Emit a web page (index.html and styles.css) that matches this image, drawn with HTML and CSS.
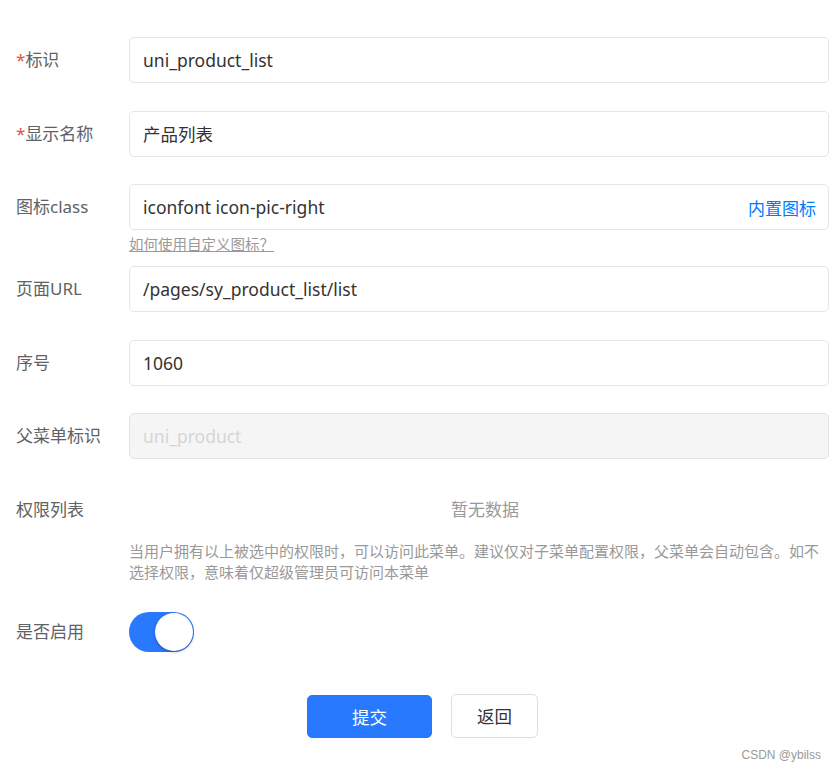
FILE: index.html
```html
<!DOCTYPE html>
<html lang="zh-CN">
<head>
  <meta charset="UTF-8" />
  <meta name="viewport" content="width=device-width, initial-scale=1.0"/>
  <title>编辑菜单</title>
  <link rel="stylesheet" href="styles.css">
</head>
<body>

  <form class="menu-form">
    <div class="form-row">
      <label class="form-label"><span class="required">*</span>标识</label>
      <div class="form-field">
        <div class="input">uni_product_list</div>
      </div>
    </div>

    <div class="form-row">
      <label class="form-label"><span class="required">*</span>显示名称</label>
      <div class="form-field">
        <div class="input">产品列表</div>
      </div>
    </div>

    <div class="form-row with-hint">
      <label class="form-label">图标class</label>
      <div class="form-field">
        <div class="input">
          <span>iconfont icon-pic-right</span>
          <a class="input-link">内置图标</a>
        </div>
        <a class="hint-link">如何使用自定义图标？</a>
      </div>
    </div>

    <div class="form-row">
      <label class="form-label">页面URL</label>
      <div class="form-field">
        <div class="input">/pages/sy_product_list/list</div>
      </div>
    </div>

    <div class="form-row">
      <label class="form-label">序号</label>
      <div class="form-field">
        <div class="input">1060</div>
      </div>
    </div>

    <div class="form-row">
      <label class="form-label">父菜单标识</label>
      <div class="form-field">
        <div class="input disabled">uni_product</div>
      </div>
    </div>

    <div class="form-row perm-row">
      <label class="form-label">权限列表</label>
      <div class="form-field">
        <div class="empty-data">暂无数据</div>
        <p class="help-text">当用户拥有以上被选中的权限时，可以访问此菜单。建议仅对子菜单配置权限，父菜单会自动包含。如不选择权限，意味着仅超级管理员可访问本菜单</p>
      </div>
    </div>

    <div class="form-row switch-row">
      <label class="form-label">是否启用</label>
      <div class="form-field">
        <span class="switch on"><span class="knob"></span></span>
      </div>
    </div>

    <div class="actions">
      <button type="button" class="btn btn-primary">提交</button>
      <button type="button" class="btn btn-plain">返回</button>
    </div>
  </form>

  <div class="watermark">CSDN @ybilss</div>

</body>
</html>
```

FILE: styles.css
```css
* {
  box-sizing: border-box;
  margin: 0;
  padding: 0;
}

body {
  font-family: "Noto Sans", "Noto Sans CJK SC", sans-serif;
  background: #ffffff;
  color: #333;
  width: 835px;
  height: 771px;
  overflow: hidden;
  position: relative;
}

.menu-form {
  padding: 37px 6px 0 16px;
}

.form-row {
  display: flex;
  align-items: flex-start;
  margin-bottom: 27.5px;
}

.form-label {
  width: 113px;
  flex-shrink: 0;
  height: 46px;
  line-height: 46px;
  font-size: 17px;
  color: #606266;
}

.required {
  color: #dd524d;
}

.form-field {
  flex: 1;
  min-width: 0;
}

.input {
  display: flex;
  align-items: center;
  justify-content: space-between;
  height: 46px;
  padding: 0 12px 0 13px;
  border: 1px solid #e5e5e5;
  border-radius: 5px;
  font-size: 17.5px;
  color: #333;
  background: #fff;
}

.input.disabled {
  background: #f5f5f5;
  color: #d5d5d5;
}

.input-link {
  color: #007aff;
  font-size: 17px;
  cursor: pointer;
}

.with-hint {
  margin-bottom: 11px;
}

.hint-link {
  display: block;
  margin-top: 3px;
  height: 22px;
  line-height: 22px;
  font-size: 14.5px;
  color: #999;
  text-decoration: underline;
  cursor: pointer;
}

.empty-data {
  height: 46px;
  line-height: 46px;
  text-align: center;
  padding-left: 12px;
  font-size: 17px;
  color: #999;
}

.perm-row {
  margin-bottom: 26px;
}

.help-text {
  margin-top: 8px;
  font-size: 15px;
  line-height: 21px;
  color: #999;
}

.switch-row .form-field {
  display: flex;
  align-items: center;
  height: 46px;
}

.switch {
  position: relative;
  display: inline-block;
  width: 65px;
  height: 40px;
  border-radius: 20px;
  background: #2979ff;
}

.switch .knob {
  position: absolute;
  top: 1px;
  right: 1px;
  width: 38px;
  height: 38px;
  border-radius: 50%;
  background: #fff;
  box-shadow: 0 1px 3px rgba(0, 0, 0, 0.35);
}

.actions {
  display: flex;
  justify-content: center;
  gap: 19px;
  margin-top: 40px;
}

.btn {
  height: 43px;
  border-radius: 5px;
  font-family: inherit;
  font-size: 17.5px;
  cursor: pointer;
}

.btn-primary {
  width: 125px;
  background: #2979ff;
  border: 1px solid #2979ff;
  color: #fff;
}

.btn-plain {
  width: 87px;
  height: 44px;
  margin-top: -1px;
  background: #fff;
  border: 1px solid #dcdfe6;
  color: #333;
}

.watermark {
  position: absolute;
  right: 14px;
  bottom: 9px;
  font-size: 12px;
  color: #999;
  font-family: "Liberation Sans", sans-serif;
}
```
